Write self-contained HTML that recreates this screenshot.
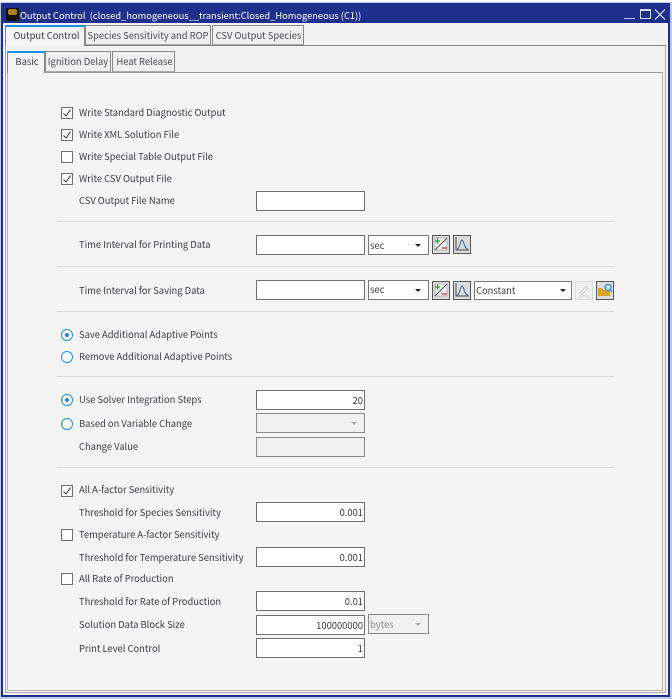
<!DOCTYPE html>
<html><head><meta charset="utf-8">
<style>
html,body{margin:0;padding:0;width:672px;height:699px;overflow:hidden;background:#fff}
body{position:relative;font-family:"Noto Sans CJK JP","Noto Sans CJK SC","Liberation Sans",sans-serif;font-size:9.4px;color:#3c3c46}
div,span{position:absolute;box-sizing:border-box}
svg{position:absolute;overflow:visible}
.t{white-space:nowrap;line-height:14px;height:14px}
.in{left:256px;width:109px;height:20px;background:#fff;border:1px solid #6f6f6f;text-align:right;padding-right:1px;line-height:18px;white-space:nowrap}
.dis{background:#f0f0f0;border-color:#8a8a8a}
.cb{left:61px;width:12px;height:12px;background:#fdfdfd;border:1px solid #6e6e6e}
.rb{left:61px;width:12px;height:12px;border-radius:50%;background:#fff;border:1px solid #1f8fe0}
.rb.on:after{content:"";position:absolute;left:3px;top:3px;width:4px;height:4px;border-radius:50%;background:#1c86d8}
.hr{left:57px;width:557px;height:1px;background:#d8d8d8}
.combo{height:20px;background:#fff;border:1px solid #777;line-height:17px;padding-left:1px;white-space:nowrap}
.arr{width:0;height:0;border-left:3.5px solid transparent;border-right:3.5px solid transparent;border-top:3.5px solid #222}
.tab{top:0;height:20px;background:#f0f0f0;border:1px solid #888;border-bottom:1px solid #aaa;text-align:center;white-space:nowrap;line-height:18px}
.btn{width:18px;height:19px;background:#dcdcdc;border:1px solid #555}
</style></head><body>

<!-- window frame -->
<div style="left:0;top:2px;width:672px;height:697px;background:#c3c9e2"></div>
<div style="left:1px;top:3px;width:669px;height:694px;background:#1f2f8c"></div>
<div style="left:3px;top:23px;width:665px;height:672px;background:#f2f2f2"></div>

<!-- title -->
<div style="left:6px;top:8px;width:13px;height:13px;background:#111"></div>
<div style="left:8px;top:9px;width:9px;height:6px;background:#a8801e;border-radius:2px"></div>
<div class="t" style="left:20px;top:8px;color:#fff;font-size:9.3px">Output Control&nbsp; (closed_homogeneous__transient:Closed_Homogeneous (C1))</div>
<div style="left:624px;top:18px;width:11px;height:1px;background:#b9c0e4"></div>
<div style="left:640px;top:9px;width:11px;height:10px;border:1px solid #d7dbf0;border-top-width:2px"></div>
<svg style="left:654px;top:9px" width="12" height="11"><path d="M1 0.5L11 10.5M11 0.5L1 10.5" stroke="#e6e9f6" stroke-width="1.1" fill="none"/></svg>

<!-- outer tabs -->
<div style="left:5px;top:45px;width:661px;height:648px;background:#f2f2f2;border:1px solid #aaa;border-top-color:#808080"></div>
<div style="left:0;top:25px;width:672px;height:21px">
  <div class="tab" style="left:85px;width:126px;top:0;height:20px;color:#4a4a52">Species Sensitivity and ROP</div>
  <div class="tab" style="left:212px;width:92px;top:0;height:20px;color:#4a4a52;padding-left:1px">CSV Output Species</div>
  <div class="tab" style="left:5px;width:80px;top:0;height:21px;background:#f5f5f5;border-bottom:0;border-top:2px solid #1f8fe0;line-height:17px;padding-left:3px">Output Control</div>
</div>

<!-- inner tabs -->
<div style="left:7px;top:72px;width:656px;height:619px;background:#f4f4f4;border:1px solid #b4b4b4;border-top-color:#999"></div>
<div style="left:0;top:51px;width:672px;height:22px">
  <div class="tab" style="left:45px;width:66px;height:21px;color:#4a4a52">Ignition Delay</div>
  <div class="tab" style="left:112px;width:63px;height:21px;color:#4a4a52;padding-left:2px">Heat Release</div>
  <div class="tab" style="left:7px;width:38px;height:22px;background:#f4f4f4;border-bottom:0;border-top:2px solid #1f8fe0;line-height:17px;padding-left:2px">Basic</div>
</div>

<!-- checks -->
<div class="cb" style="top:107px"></div><svg style="left:61px;top:107px" width="12" height="12"><path d="M2.5 6.5L5 9L9.5 2.5" stroke="#333" stroke-width="1" fill="none"/></svg>
<div class="t" style="left:79px;top:105px">Write Standard Diagnostic Output</div>
<div class="cb" style="top:129px"></div><svg style="left:61px;top:129px" width="12" height="12"><path d="M2.5 6.5L5 9L9.5 2.5" stroke="#333" stroke-width="1" fill="none"/></svg>
<div class="t" style="left:79px;top:127px">Write XML Solution File</div>
<div class="cb" style="top:151px"></div>
<div class="t" style="left:79px;top:149px">Write Special Table Output File</div>
<div class="cb" style="top:173px"></div><svg style="left:61px;top:173px" width="12" height="12"><path d="M2.5 6.5L5 9L9.5 2.5" stroke="#333" stroke-width="1" fill="none"/></svg>
<div class="t" style="left:79px;top:171px">Write CSV Output File</div>
<div class="t" style="left:79px;top:193px">CSV Output File Name</div>
<div class="in" style="top:191px"></div>

<div class="hr" style="top:221px"></div>

<div class="t" style="left:79px;top:237px">Time Interval for Printing Data</div>
<div class="in" style="top:235px"></div>
<div class="combo" style="left:368px;top:235px;width:61px;line-height:18px">sec</div><div class="arr" style="left:415px;top:244px"></div>
<div class="btn" style="left:432px;top:235px"></div>
<svg style="left:432px;top:235px" width="18" height="19"><rect x="3" y="3" width="12" height="12" fill="#eee" stroke="#999" stroke-width=".6"/><path d="M3 15L15 3" stroke="#555" fill="none"/><path d="M3 6H8M5.500 3.500V8.500" stroke="#2a9a3a" stroke-width="1.200" fill="none"/><path d="M10 13H15" stroke="#d03030" stroke-width="1.200" fill="none"/></svg>
<div class="btn" style="left:453px;top:235px"></div>
<svg style="left:453px;top:235px" width="18" height="19"><path d="M3 2V15H16" stroke="#444" fill="none"/><path d="M4 14C7 14 7 5 9 5C11 5 11 14 15 14" stroke="#3a5cb0" stroke-width="1" fill="none"/></svg>

<div class="hr" style="top:266px"></div>

<div class="t" style="left:79px;top:283px">Time Interval for Saving Data</div>
<div class="in" style="top:280px"></div>
<div class="combo" style="left:368px;top:280px;width:61px">sec</div><div class="arr" style="left:415px;top:289px"></div>
<div class="btn" style="left:432px;top:281px"></div>
<svg style="left:432px;top:281px" width="18" height="19"><rect x="3" y="3" width="12" height="12" fill="#eee" stroke="#999" stroke-width=".6"/><path d="M3 15L15 3" stroke="#555" fill="none"/><path d="M3 6H8M5.500 3.500V8.500" stroke="#2a9a3a" stroke-width="1.200" fill="none"/><path d="M10 13H15" stroke="#d03030" stroke-width="1.200" fill="none"/></svg>
<div class="btn" style="left:453px;top:281px"></div>
<svg style="left:453px;top:281px" width="18" height="19"><path d="M3 2V15H16" stroke="#444" fill="none"/><path d="M4 14C7 14 7 5 9 5C11 5 11 14 15 14" stroke="#3a5cb0" stroke-width="1" fill="none"/></svg>
<div class="combo" style="left:474px;top:281px;width:98px;height:19px;line-height:16px">Constant</div><div class="arr" style="left:560px;top:289px"></div>
<div style="left:575px;top:281px;width:18px;height:19px;background:#f0f0f0;border:1px solid #dcdcdc"></div>
<svg style="left:575px;top:281px" width="18" height="19"><path d="M5 12L11 5L13 7L7 13.500ZM4 15H14" stroke="#cfcfcf" stroke-width="1" fill="none"/></svg>
<div class="btn" style="left:596px;top:281px"></div>
<svg style="left:596px;top:281px" width="18" height="19"><path d="M2 15V7H6L7.500 9H14V15Z" fill="#d9a32e"/><circle cx="12" cy="6.500" r="3" fill="#cfe6f7" stroke="#2b8fd8" stroke-width="1.300"/><path d="M14 8.500L16 11" stroke="#2b8fd8" stroke-width="1.300"/></svg>

<div class="hr" style="top:311px"></div>

<div class="rb on" style="top:329px"></div>
<div class="t" style="left:79px;top:327px">Save Additional Adaptive Points</div>
<div class="rb" style="top:351px"></div>
<div class="t" style="left:79px;top:349px">Remove Additional Adaptive Points</div>

<div class="hr" style="top:376px"></div>

<div class="rb on" style="top:394px"></div>
<div class="t" style="left:79px;top:392px">Use Solver Integration Steps</div>
<div class="in" style="top:390px">20</div>
<div class="rb" style="top:418px"></div>
<div class="t" style="left:79px;top:416px">Based on Variable Change</div>
<div class="in dis" style="top:413px"></div><div class="arr" style="left:351px;top:422px;border-top-color:#aaa"></div>
<div class="t" style="left:79px;top:439px">Change Value</div>
<div class="in dis" style="top:437px"></div>

<div class="hr" style="top:467px"></div>

<div class="cb" style="top:485px"></div><svg style="left:61px;top:485px" width="12" height="12"><path d="M2.5 6.5L5 9L9.5 2.5" stroke="#333" stroke-width="1" fill="none"/></svg>
<div class="t" style="left:79px;top:482px">All A-factor Sensitivity</div>
<div class="t" style="left:79px;top:505px">Threshold for Species Sensitivity</div>
<div class="in" style="top:502px">0.001</div>
<div class="cb" style="top:529px"></div>
<div class="t" style="left:79px;top:527px">Temperature A-factor Sensitivity</div>
<div class="t" style="left:79px;top:550px">Threshold for Temperature Sensitivity</div>
<div class="in" style="top:547px">0.001</div>
<div class="cb" style="top:573px"></div>
<div class="t" style="left:79px;top:571px">All Rate of Production</div>
<div class="t" style="left:79px;top:594px">Threshold for Rate of Production</div>
<div class="in" style="top:591px">0.01</div>
<div class="t" style="left:79px;top:617px">Solution Data Block Size</div>
<div class="in" style="top:615px">100000000</div>
<div class="combo" style="left:368px;top:614px;width:61px;background:#f0f0f0;border-color:#8a8a8a;color:#8a8a8a;line-height:18px">bytes</div><div class="arr" style="left:415px;top:623px;border-top-color:#aaa"></div>
<div class="t" style="left:79px;top:641px">Print Level Control</div>
<div class="in" style="top:638px">1</div>

</body></html>
